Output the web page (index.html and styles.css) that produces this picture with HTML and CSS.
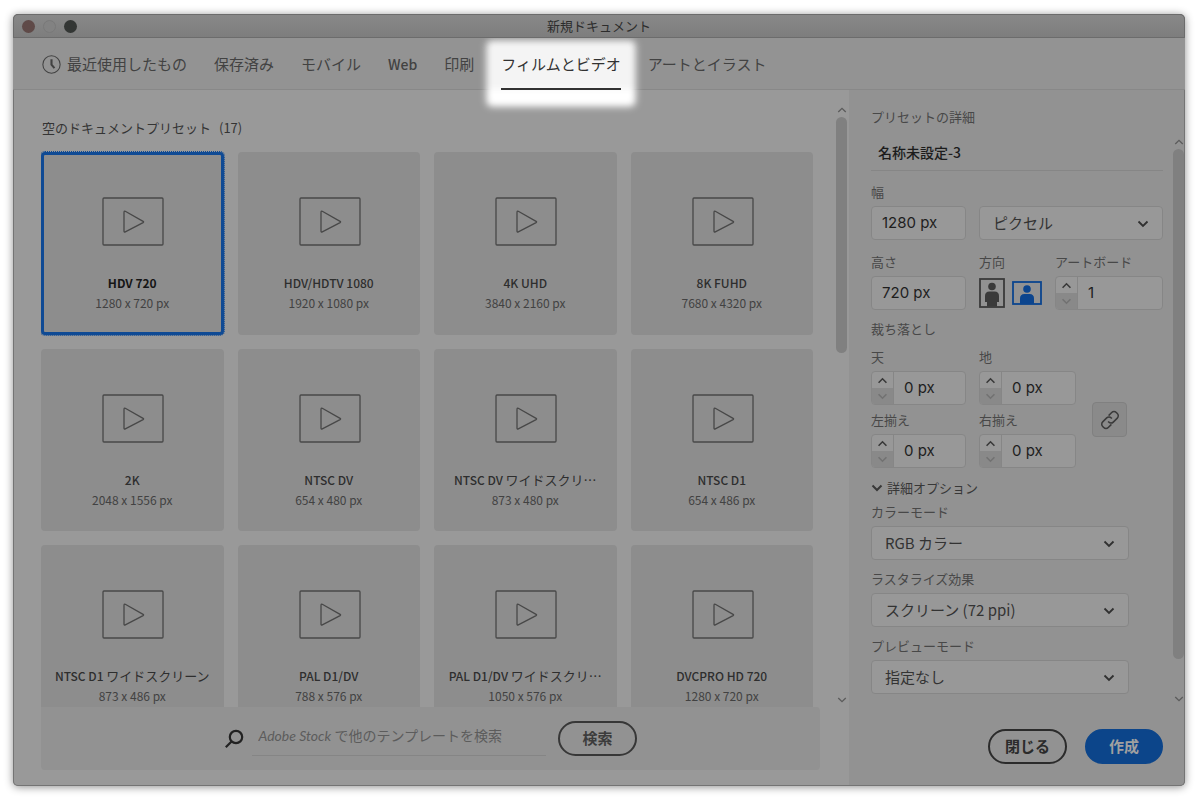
FILE: index.html
```html
<!DOCTYPE html>
<html lang="ja">
<head>
<meta charset="utf-8">
<title>新規ドキュメント</title>
<link rel="stylesheet" href="styles.css">
</head>
<body>
<svg class="defs" aria-hidden="true">
  <symbol id="video" viewBox="0 0 62 49"><rect x="1" y="1" width="60" height="47" rx="1"/><path d="M22 15.500v18.500q0 1.400 1.300.8l17.800-9.200q1-.6 0-1.200L23.300 14.300q-1.300-.6-1.300 1.200z"/></symbol>
  <symbol id="down" viewBox="0 0 12 8"><path d="M1.500 1.500 6 6l4.500-4.500"/></symbol>
  <symbol id="up" viewBox="0 0 12 8"><path d="M1.500 6.500 6 2l4.500 4.500"/></symbol>
</svg>
<main class="window">
  <header class="titlebar">
    <div class="lights"><span class="light close"></span><span class="light mini"></span><span class="light full"></span></div>
    <h1 class="window-title">新規ドキュメント</h1>
  </header>
  <nav class="tabs">
    <a class="tab" href="#recent"><svg class="clock" viewBox="0 0 18 18"><circle cx="9" cy="9" r="8.200"/><path class="hand" d="M9 4v5.200l2.800 3.200"/></svg>最近使用したもの</a>
    <a class="tab" href="#saved">保存済み</a>
    <a class="tab" href="#mobile">モバイル</a>
    <a class="tab latin" href="#web">Web</a>
    <a class="tab" href="#print">印刷</a>
    <a class="tab active" href="#film" aria-current="page">フィルムとビデオ</a>
    <a class="tab" href="#art">アートとイラスト</a>
  </nav>
  <div class="content">
    <section class="browser">
      <div class="browse-row">
        <div class="presets">
          <h2 class="presets-title">空のドキュメントプリセット<span class="count">(17)</span></h2>
          <div class="grid">
            <button class="card selected"><svg class="video"><use href="#video"/></svg><span class="name">HDV 720</span><span class="size">1280 x 720 px</span></button>
            <button class="card"><svg class="video"><use href="#video"/></svg><span class="name">HDV/HDTV 1080</span><span class="size">1920 x 1080 px</span></button>
            <button class="card"><svg class="video"><use href="#video"/></svg><span class="name">4K UHD</span><span class="size">3840 x 2160 px</span></button>
            <button class="card"><svg class="video"><use href="#video"/></svg><span class="name">8K FUHD</span><span class="size">7680 x 4320 px</span></button>
            <button class="card"><svg class="video"><use href="#video"/></svg><span class="name">2K</span><span class="size">2048 x 1556 px</span></button>
            <button class="card"><svg class="video"><use href="#video"/></svg><span class="name">NTSC DV</span><span class="size">654 x 480 px</span></button>
            <button class="card"><svg class="video"><use href="#video"/></svg><span class="name">NTSC DV <span class="ja">ワイドスクリ…</span></span><span class="size">873 x 480 px</span></button>
            <button class="card"><svg class="video"><use href="#video"/></svg><span class="name">NTSC D1</span><span class="size">654 x 486 px</span></button>
            <button class="card"><svg class="video"><use href="#video"/></svg><span class="name">NTSC D1 <span class="ja">ワイドスクリーン</span></span><span class="size">873 x 486 px</span></button>
            <button class="card"><svg class="video"><use href="#video"/></svg><span class="name">PAL D1/DV</span><span class="size">788 x 576 px</span></button>
            <button class="card"><svg class="video"><use href="#video"/></svg><span class="name">PAL D1/DV <span class="ja">ワイドスクリ…</span></span><span class="size">1050 x 576 px</span></button>
            <button class="card"><svg class="video"><use href="#video"/></svg><span class="name">DVCPRO HD 720</span><span class="size">1280 x 720 px</span></button>
          </div>
        </div>
        <div class="scrollbar"><svg class="arrow"><use href="#up"/></svg><div class="track"><div class="thumb browse-thumb"></div></div><svg class="arrow"><use href="#down"/></svg></div>
      </div>
      <form class="stock">
        <label class="stock-label" for="stock" aria-label="テンプレートを検索"><svg class="lens" viewBox="0 0 20 20"><circle cx="12" cy="8" r="6.200"/><path d="M7.500 12.500 1.800 18.200"/></svg></label>
        <input class="stock-input" id="stock" type="text" placeholder="Adobe Stock で他のテンプレートを検索">
        <button class="pill stock-button" type="button">検索</button>
      </form>
    </section>
    <aside class="details">
      <h2 class="details-title">プリセットの詳細</h2>
      <div class="details-row">
        <form class="form">
          <input class="doc-name" aria-label="名称" type="text" value="名称未設定-3">
          <div class="fields">
            <div class="field"><label for="width">幅</label><input class="box" id="width" type="text" value="1280 px"></div>
            <div class="field wide units"><div class="select"><select id="unit" aria-label="単位"><option>ピクセル</option></select><svg class="chevron"><use href="#down"/></svg></div></div>
            <div class="field"><label for="height">高さ</label><input class="box" id="height" type="text" value="720 px"></div>
            <div class="field"><span class="caption">方向</span>
              <div class="orient">
                <button class="orient-button portrait" type="button" aria-label="縦置き"><svg viewBox="0 0 26 30"><rect class="frame" x="1" y="1" width="24" height="28"/><circle cx="13" cy="8.500" r="3.800"/><path d="M6 24v-6q0-4.500 4.500-4.500h5q4.500 0 4.500 4.500v6h-2v4.500H8V24z"/></svg></button>
                <button class="orient-button landscape" type="button" aria-label="横置き"><svg viewBox="0 0 30 24"><rect class="frame" x="1" y="1" width="28" height="22"/><circle cx="15" cy="8" r="3.800"/><path d="M8 23v-5.500q0-4.500 4.500-4.500h5q4.500 0 4.500 4.500V23z"/></svg></button>
              </div>
            </div>
            <div class="field"><label for="boards">アートボード</label><div class="stepper"><span class="spin"><button type="button" aria-label="増やす"><svg><use href="#up"/></svg></button><button class="less" type="button" aria-label="減らす"><svg><use href="#down"/></svg></button></span><input id="boards" type="text" value="1"></div></div>
          </div>
          <h3 class="caption bleed-title">裁ち落とし</h3>
          <div class="bleed">
            <div class="bleed-grid">
              <div class="field"><label for="top">天</label><div class="stepper"><span class="spin"><button type="button" aria-label="増やす"><svg><use href="#up"/></svg></button><button class="less" type="button" aria-label="減らす"><svg><use href="#down"/></svg></button></span><input id="top" type="text" value="0 px"></div></div>
              <div class="field"><label for="bottom">地</label><div class="stepper"><span class="spin"><button type="button" aria-label="増やす"><svg><use href="#up"/></svg></button><button class="less" type="button" aria-label="減らす"><svg><use href="#down"/></svg></button></span><input id="bottom" type="text" value="0 px"></div></div>
              <div class="field"><label for="left">左揃え</label><div class="stepper"><span class="spin"><button type="button" aria-label="増やす"><svg><use href="#up"/></svg></button><button class="less" type="button" aria-label="減らす"><svg><use href="#down"/></svg></button></span><input id="left" type="text" value="0 px"></div></div>
              <div class="field"><label for="right">右揃え</label><div class="stepper"><span class="spin"><button type="button" aria-label="増やす"><svg><use href="#up"/></svg></button><button class="less" type="button" aria-label="減らす"><svg><use href="#down"/></svg></button></span><input id="right" type="text" value="0 px"></div></div>
            </div>
            <button class="link" type="button" aria-label="すべてを同じ設定にする"><svg viewBox="0 0 20 20"><path d="M8.600 5.600 11.700 2.500a3.200 3.200 0 0 1 4.600 0l1 1a3.200 3.200 0 0 1 0 4.600l-4 4a3.200 3.200 0 0 1-4.600 0l-.6-.6"/><path d="M11.400 14.400 8.300 17.500a3.200 3.200 0 0 1-4.600 0l-1-1a3.200 3.200 0 0 1 0-4.600l4-4a3.200 3.200 0 0 1 4.600 0l.6.6"/></svg></button>
          </div>
          <button class="advanced" type="button"><svg><use href="#down"/></svg>詳細オプション</button>
          <div class="options">
            <div class="field"><label for="color">カラーモード</label><div class="select"><select id="color"><option>RGB カラー</option></select><svg class="chevron"><use href="#down"/></svg></div></div>
            <div class="field"><label for="raster">ラスタライズ効果</label><div class="select"><select id="raster"><option>スクリーン (72 ppi)</option></select><svg class="chevron"><use href="#down"/></svg></div></div>
            <div class="field"><label for="preview">プレビューモード</label><div class="select"><select id="preview"><option>指定なし</option></select><svg class="chevron"><use href="#down"/></svg></div></div>
          </div>
        </form>
        <div class="scrollbar"><svg class="arrow"><use href="#up"/></svg><div class="track"><div class="thumb details-thumb"></div></div><svg class="arrow"><use href="#down"/></svg></div>
      </div>
      <footer class="actions"><button class="pill cancel" type="button">閉じる</button><button class="pill create" type="button">作成</button></footer>
    </aside>
  </div>
</main>
</body>
</html>
```
FILE: styles.css
```css
* { box-sizing: border-box; }
body {
  margin: 0;
  padding: 14px 15px 15px 13px;
  background: #fff;
  color: #3c3c3c;
  font: 13px/20px "Noto Sans CJK JP", sans-serif;
}
button, input, select { font: inherit; color: inherit; margin: 0; padding: 0; border: 0; background: none; }
h1, h2, h3 { margin: 0; font-size: 13px; font-weight: 400; }
svg { display: block; flex: none; fill: none; stroke: currentColor; }
.defs { position: absolute; width: 0; height: 0; }

.window {
  display: flex;
  flex-direction: column;
  height: calc(100vh - 29px);
  min-height: 600px;
  overflow: hidden;
  border-radius: 5px;
  background: #999;
  box-shadow: inset 0 0 0 1px #747474, 0 1px 9px rgba(0, 0, 0, .45);
}
.titlebar {
  position: relative;
  z-index: 2;
  display: grid;
  grid-template-columns: 1fr auto 1fr;
  align-items: center;
  height: 24px;
  padding: 0 8px;
  background: linear-gradient(#888, #7d7d7d);
  border: 1px solid #6c6c6c;
  border-radius: 5px 5px 0 0;
}
.lights { display: flex; gap: 8px; }
.light { width: 13px; height: 13px; border-radius: 50%; }
.close { background: #5f4a48; }
.mini { background: #828282; border: 1px solid #797979; }
.full { background: #333634; }
.window-title { color: #2c2c2c; }

.tabs {
  position: relative;
  z-index: 1;
  display: flex;
  gap: 27px;
  height: 52px;
  padding: 0 29px;
  background: #939393;
  border-bottom: 1px solid #888;
  font-size: 15px;
}
.tab {
  position: relative;
  display: flex;
  align-items: center;
  gap: 6px;
  height: 52px;
  color: #424242;
  text-decoration: none;
  white-space: nowrap;
}
.latin { font-size: 14px; font-weight: 500; }
.clock { width: 19px; height: 19px; stroke-width: 1; }
.hand { stroke-width: 2; }
.active { z-index: 0; color: #323232; }
.active::before {
  content: "";
  position: absolute;
  z-index: -1;
  inset: 3px -14px -16px;
  border-radius: 5px;
  background: linear-gradient(#f4f4f4 48px, #fff 48px);
  box-shadow: 0 0 5px 1px rgba(255, 255, 255, .5);
  filter: blur(3px);
}
.active::after {
  content: "";
  position: absolute;
  inset: auto 0 0;
  height: 2px;
  background: #323232;
}

.content { display: grid; grid-template-columns: minmax(0, 1fr) 336px; flex: 1; min-height: 0; }
.browser { display: flex; flex-direction: column; min-width: 0; min-height: 0; padding: 13px 0 16px 28px; }
.browse-row { display: flex; justify-content: space-between; gap: 23px; flex: 1; min-height: 0; }
.presets { flex: 1; padding-top: 15px; overflow: hidden; }
.presets-title { color: #343434; padding-left: 1px; }
.count { margin-left: 8px; }
.grid { display: grid; grid-template-columns: repeat(4, minmax(0, 1fr)); gap: 14px; margin-top: 14px; }
.card {
  position: relative;
  display: flex;
  flex-direction: column;
  align-items: center;
  justify-content: flex-start;
  aspect-ratio: 1;
  padding-top: 45px;
  border-radius: 4px;
  background: #8d8d8d;
}
.video { width: 62px; height: 49px; margin: 0 0 27px 2px; stroke: #484848; stroke-width: 1.3; }
.name { color: #2e2e2e; font-size: 12px; font-weight: 500; white-space: nowrap; }
.ja { font-size: 13px; font-weight: 400; }
.size { color: #424242; font-size: 12px; white-space: nowrap; }
.selected::after {
  content: "";
  position: absolute;
  inset: 0;
  border: 3px solid #0f4a94;
  border-radius: 4px;
  outline: 1px dotted #0f4a94;
}
.selected .name { color: #161616; font-weight: 700; }

.scrollbar { display: flex; flex-direction: column; align-items: center; width: 12px; margin-right: 1px; color: #5c5c5c; }
.arrow { width: 10px; height: 14px; stroke-width: 1.6; }
.track { flex: 1; width: 100%; }
.thumb { width: 11px; border-radius: 6px; background: #808080; }
.browse-thumb { height: 41%; }
.details-thumb { height: 94%; }

.stock {
  display: flex;
  align-items: center;
  justify-content: center;
  height: 63px;
  margin-right: 29px;
  border-radius: 0 4px 4px 4px;
  background: #929292;
}
.stock-label { height: 20px; margin: 0; }
.lens { width: 20px; height: 20px; stroke: #222; stroke-width: 2.2; }
.stock-input { width: 294px; height: 34px; margin: 0 12px 0 8px; padding: 0 6px 6px; border-bottom: 1px solid #858585; font-size: 14px; }
.stock-input::placeholder { color: #5c5c5c; opacity: 1; font-family: Lato, "Noto Sans CJK JP", sans-serif; font-style: italic; font-synthesis: none; }
.pill { height: 35px; padding: 0 22px; border: 2px solid #373737; border-radius: 18px; font-size: 15px; font-weight: 700; line-height: 27px; padding-bottom: 3px; white-space: nowrap; }

.details { display: flex; flex-direction: column; min-height: 0; padding: 17px 0 21px 22px; background: #929292; border-right: 1px solid #747474; border-bottom: 1px solid #747474; border-radius: 0 0 5px; }
.details-title { color: #484848; }
.details-row { display: flex; gap: 10px; flex: 1; min-height: 0; margin-top: 8px; }
.details-row .scrollbar { width: 11px; margin: 0; }
.form { flex: 1; min-width: 0; overflow: hidden; }
.doc-name { display: block; width: 100%; height: 36px; padding: 0 7px 2px; color: #1c1c1c; border-bottom: 1px solid #868686; font-size: 14px; font-weight: 500; }
.field label, .caption { display: block; height: 20px; margin-bottom: 4px; color: #484848; white-space: nowrap; }
.fields { display: grid; grid-template-columns: 95px 63px 1fr; gap: 12px 13px; margin-top: 11px; }
.wide { grid-column: span 2; }
.units { align-self: end; }
.box, .stepper, .select { width: 100%; height: 34px; border: 1px solid #868686; border-radius: 4px; background: #989898; }
.box, .stepper input { display: block; min-width: 0; padding: 0 10px 1px; color: #1e1e1e; font-family: Inter, "Noto Sans CJK JP", sans-serif; font-size: 15px; }
.stepper { display: flex; overflow: hidden; }
.stepper input { flex: 1; width: 100%; }
.spin { display: flex; flex-direction: column; width: 22px; border-right: 1px solid #868686; }
.spin button { display: grid; place-items: center; flex: 1; width: 100%; }
.spin svg { width: 11px; height: 7px; stroke: #383838; stroke-width: 1.8; }
.spin .less { background: #898989; }
.spin .less svg { stroke: #727272; }
.select { position: relative; }
select { width: 100%; height: 32px; padding: 0 32px 0 13px; appearance: none; color: #333; font-size: 15px; line-height: 30px; }
.chevron { position: absolute; right: 13px; top: 13px; width: 12px; height: 8px; stroke: #303030; stroke-width: 1.8; pointer-events: none; }
.orient { display: flex; align-items: center; gap: 7px; height: 34px; }
.orient-button svg { fill: currentColor; stroke: none; }
.orient-button .frame { fill: none; stroke: currentColor; stroke-width: 1.8; }
.portrait { color: #3a3a3a; }
.portrait svg { width: 26px; height: 30px; }
.landscape { color: #0c458e; }
.landscape svg { width: 30px; height: 24px; }
.bleed-title { margin: 9px 0 8px; }
.bleed { display: flex; align-items: flex-end; gap: 16px; }
.bleed-grid { display: grid; grid-template-columns: 95px 97px; gap: 5px 13px; }
.link { display: grid; place-items: center; width: 35px; height: 35px; margin-bottom: 31px; border: 1px solid #808080; border-radius: 4px; background: #8a8a8a; }
.link svg { width: 20px; height: 20px; stroke: #3a3a3a; stroke-width: 1.5; }
.advanced { display: flex; align-items: center; gap: 4px; height: 20px; margin: 10px 0 4px; color: #383838; }
.advanced svg { width: 12px; height: 8px; stroke-width: 2; }
.options { display: grid; gap: 9px; width: 258px; }
.actions { display: flex; justify-content: flex-end; gap: 18px; padding: 23px 21px 0 0; }
.cancel { padding: 0 15px 3px; border-color: #2b2b2b; color: #2b2b2b; }
.create { border-color: #0c458a; background: #0c458a; color: #a0a0a0; }
```
